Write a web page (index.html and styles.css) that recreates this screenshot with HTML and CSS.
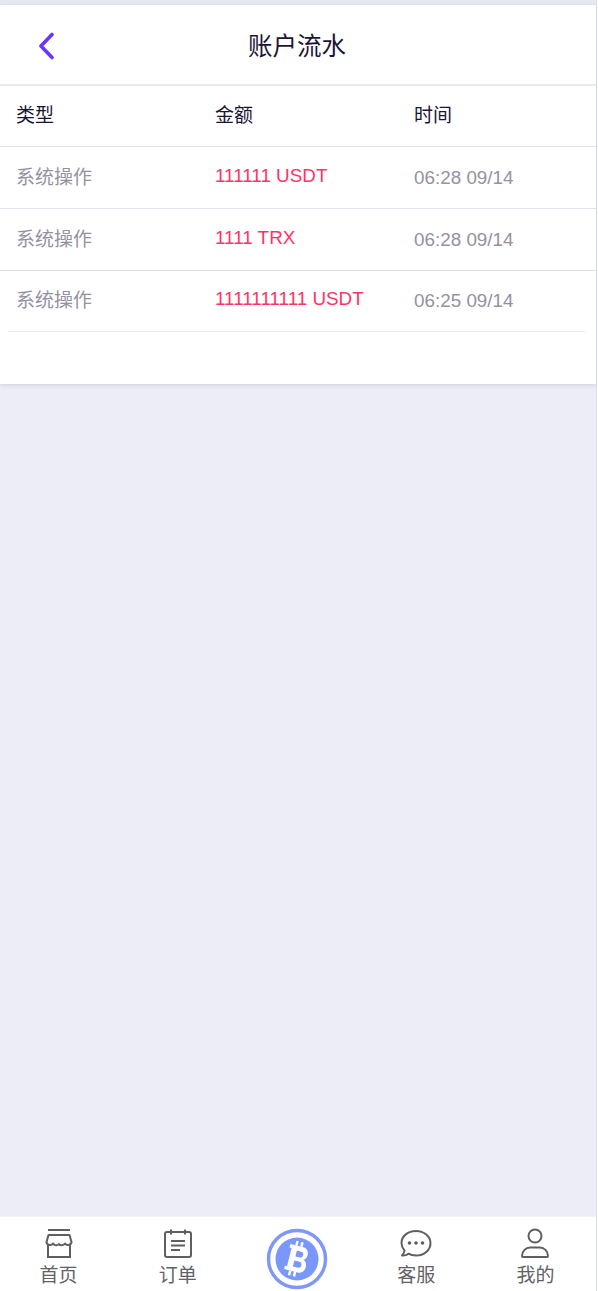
FILE: index.html
```html
<!DOCTYPE html>
<html lang="zh">
<head>
<meta charset="utf-8">
<title>账户流水</title>
<link rel="stylesheet" href="styles.css">
</head>
<body>
<div class="app">
  <div class="card">
    <header class="nav">
      <a class="back" href="#" aria-label="返回">
        <svg width="18" height="28" viewBox="0 0 18 28"><path d="M15 2.500 4 14l11 11.500" fill="none" stroke="#6a35ff" stroke-width="3.600" stroke-linecap="round" stroke-linejoin="round"/></svg>
      </a>
      <h1 class="title">账户流水</h1>
    </header>
    <div class="row head">
      <span class="cell cjk">类型</span><span class="cell cjk">金额</span><span class="cell cjk">时间</span>
    </div>
    <div class="row">
      <span class="cell cjk muted">系统操作</span><span class="cell amount">111111 USDT</span><span class="cell muted">06:28 09/14</span>
    </div>
    <div class="row">
      <span class="cell cjk muted">系统操作</span><span class="cell amount">1111 TRX</span><span class="cell muted">06:28 09/14</span>
    </div>
    <div class="row last">
      <span class="cell cjk muted">系统操作</span><span class="cell amount">1111111111 USDT</span><span class="cell muted">06:25 09/14</span>
    </div>
  </div>
  <div class="spacer"></div>
  <nav class="tabs">
    <a class="tab" href="#">
      <svg class="ico" width="30" height="30" viewBox="0 0 30 30" fill="none" stroke="#5f5f63" stroke-width="2"><path d="M4 2h22"/><path d="M4.500 7h21l2 7c-.5 3.500-5 4-6.500 1.500-1.500 2-5 2.500-6 .5-1.500 2-5 1.500-6-.5-1.500 2.500-6 2-6.500-1.500z" stroke-linejoin="round"/><path d="M4 16v13h22V16"/></svg>
      <span>首页</span>
    </a>
    <a class="tab" href="#">
      <svg class="ico" width="30" height="30" viewBox="0 0 30 30" fill="none" stroke="#5f5f63" stroke-width="2"><rect x="2" y="4" width="26" height="25" rx="2"/><path d="M8 1.500v5M22 1.500v5"/><path d="M8 13h14M8 17.500h14M8 22h9"/></svg>
      <span>订单</span>
    </a>
    <a class="tab" href="#">
      <svg class="coin" width="62" height="62" viewBox="0 0 62 62">
        <circle cx="31" cy="31" r="28.500" fill="#fff" stroke="#8098f5" stroke-width="3.500"/>
        <circle cx="31" cy="31" r="21.500" fill="#7a97fb"/>
        <g transform="rotate(14 31 31) translate(31 31) scale(.72 .86) translate(-33 -31)" fill="#fff">
          <path fill-rule="evenodd" d="M19 16h19c5 0 8 3.500 8 7.500 0 3-1.500 5.500-4 6.500 3.500 1 5.500 4 5.500 7.500 0 5-3.500 8.500-9 8.500H19v-4h3V20h-3zM30 21.500v7h6.500a3.500 3.500 0 0 0 0-7zM30 33.500v7h7.500a3.500 3.500 0 0 0 0-7z"/>
          <path d="M26 10.500h3.500V16H26zM33 10.500h3.500V16H33zM26 46h3.500v5.500H26zM33 46h3.500v5.500H33z"/>
        </g>
      </svg>
    </a>
    <a class="tab" href="#">
      <svg class="ico" width="32" height="30" viewBox="0 0 32 30" fill="none" stroke="#5f5f63" stroke-width="2"><path d="M16 3C8 3 1.500 8 1.500 15c0 3 1.200 5.500 3 7.500-.2 2-1.200 3.500-2.500 5 3 .2 5-.5 6.500-1.800C10.500 27 13 27.500 16 27.500c8 0 14.500-5.500 14.500-12.300S24 3 16 3z" stroke-linejoin="round"/><g fill="#5f5f63" stroke="none"><circle cx="9.500" cy="15" r="1.800"/><circle cx="16" cy="15" r="1.800"/><circle cx="22.500" cy="15" r="1.800"/></g></svg>
      <span>客服</span>
    </a>
    <a class="tab" href="#">
      <svg class="ico" width="30" height="30" viewBox="0 0 30 30" fill="none" stroke="#5f5f63" stroke-width="2"><circle cx="15" cy="8" r="6.500"/><path d="M2 28c0-5 4-8.500 8-8.500h10c4 0 8 3.500 8 8.500 0 .5-.5 1-1 1H3c-.5 0-1-.5-1-1z"/></svg>
      <span>我的</span>
    </a>
  </nav>
</div>
</body>
</html>
```
FILE: styles.css
```css
* { box-sizing: border-box; }
html, body { margin: 0; height: 100%; }
body {
  background: #fff;
  font-family: "Liberation Sans", "Noto Sans CJK SC", sans-serif;
  color: #1b1534;
}
.app {
  width: 597px;
  height: 1291px;
  display: flex;
  flex-direction: column;
  background: #ecedf6;
  border-right: 1px solid #dcdfe8;
}
.app::before {
  content: "";
  flex: none;
  height: 4px;
  background: #e5e9f2;
}
.card {
  background: #fff;
  height: 380px;
  flex: none;
  border-top: 1px solid #dfe2ea;
  box-shadow: 0 2px 4px rgba(120, 120, 150, .18);
  display: flex;
  flex-direction: column;
}
.nav {
  height: 81px;
  flex: none;
  display: flex;
  align-items: center;
  justify-content: center;
  position: relative;
  border-bottom: 2px solid #e9e9f2;
}
.back { position: absolute; left: 37px; top: 27px; display: block; line-height: 0; }
.title { margin: 0; font-size: 24.500px; font-weight: 400; line-height: 32px; padding: 5px 2px 0 0; }
.row {
  height: 62px;
  flex: none;
  display: grid;
  grid-template-columns: 199px 199px 198px;
  align-items: center;
  border-bottom: 1px solid #e2e2ee;
}
.row.head { height: 61px; }
.row.last { height: 61px; margin: 0 11px 0 8px; grid-template-columns: 191px 199px 187px; border-bottom-color: #e8e8f2; }
.row.last .cell:first-child { padding-left: 8px; }
.cell { padding-left: 16px; font-size: 18.850px; line-height: 26px; white-space: nowrap; }
.cjk { font-size: 19px; }
.muted { color: #96919f; }
.amount { color: #ff3366; position: relative; top: -2px; }
.spacer { flex: 1; }
.tabs {
  height: 75px;
  flex: none;
  background: #fff;
  display: grid;
  grid-template-columns: repeat(5, 1fr);
  border-top: 1px solid #f2f2f8;
}
.tab {
  display: flex;
  flex-direction: column;
  align-items: center;
  text-decoration: none;
  color: #626266;
  font-size: 19px;
  line-height: 24px;
  padding-top: 11px;
  padding-right: 2px;
}
.tab span { padding-top: 3px; }
.ico { display: block; flex: none; margin-bottom: 3px; }
.coin { display: block; flex: none; }
```
